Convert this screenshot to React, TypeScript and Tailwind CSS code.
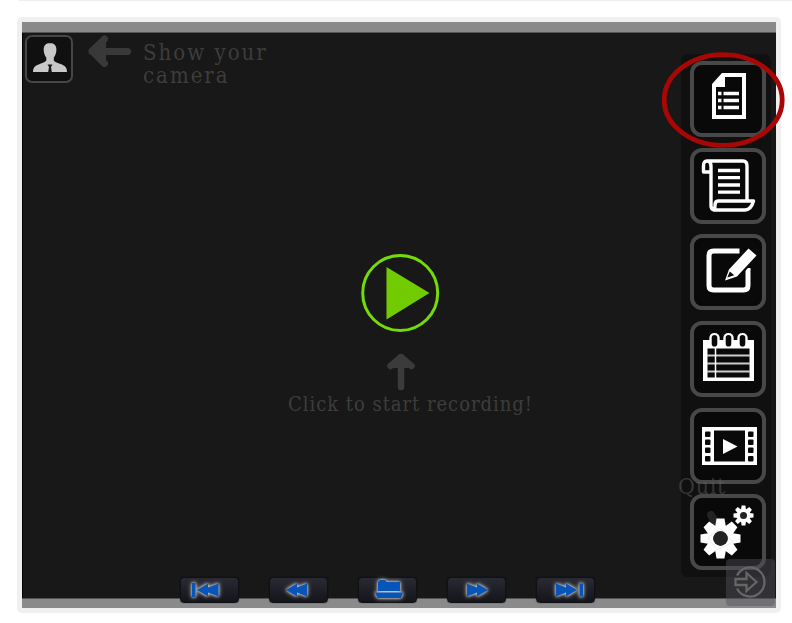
import type { ReactNode } from "react";

function ToolButton({ label, viewBox, children }: { label: string; viewBox: string; children: ReactNode }) {
  return (
    <button aria-label={label} className="h-[76px] w-[76px] shrink-0 rounded-[12px] border-4 border-[#484848] bg-[#090909]">
      <svg viewBox={viewBox} className="-m-1 block h-[76px] w-[76px]">
        {children}
      </svg>
    </button>
  );
}

function Gear({ cx, cy, outer, body, hole, tooth }: { cx: number; cy: number; outer: number; body: number; hole: number; tooth: number }) {
  return (
    <g transform={`translate(${cx} ${cy})`}>
      {[0, 45, 90, 135].map((a) => (
        <path
          key={a}
          transform={`rotate(${a})`}
          fill="#fff"
          d={`M${-tooth * 0.9} ${-outer}H${tooth * 0.9}L${tooth * 1.2} ${-body + 1}V${body - 1}L${tooth * 0.9} ${outer}H${-tooth * 0.9}L${-tooth * 1.2} ${body - 1}V${-body + 1}Z`}
        />
      ))}
      <circle r={body} fill="#fff" />
      <circle r={hole} fill="#222" />
    </g>
  );
}

function MediaButton({ label, children }: { label: string; children: ReactNode }) {
  return (
    <button
      aria-label={label}
      className="h-[26px] w-[59px] rounded-[4px] border border-[#101116] bg-linear-to-b from-[#292a33] to-[#14151b] shadow-[0_0_1px_#000]"
    >
      <svg viewBox="0 0 59 26" className="-m-px block h-[26px] w-[59px] fill-[#0755b8] drop-shadow-[0_0_2px_#c9c9c9]">
        <g className="drop-shadow-[0_0_1px_#c9c9c9]">{children}</g>
      </svg>
    </button>
  );
}

export default function App() {
  return (
    <div className="relative h-[623px] w-[792px] overflow-hidden bg-white font-['DejaVu_Serif_Condensed','DejaVu_Serif',serif]">
      <div className="ml-[19px] h-px bg-[#ededed]" />
      <div className="mt-4 ml-[17px] h-[596px] w-[764px] rounded-[5px] bg-[#f0f0f0] p-[5px]">
        <div className="flex h-[586px] w-[754px] flex-col bg-[#181818]">
          <div className="h-[11px] shrink-0 border-b border-[#555] bg-[#8a8a8a]" />

          <main className="flex h-[565px] shrink-0 border-l border-black">
            <div className="flex w-[120px] shrink-0 pt-[2px] pl-[2px]">
              <button aria-label="Camera" className="h-[48px] w-[48px] rounded-[7px] border-2 border-[#474747] bg-[#101010]">
                <svg viewBox="25 35 48 48" className="-m-0.5 block h-[48px] w-[48px]">
                  <path
                    fill="#c8c8c8"
                    d="M50 43c-4.500 0-6.500 3-6.300 7 .2 3.500 1.300 6 2.600 7.500v3c-1 1.500-3 2-6 3.200-4.500 1.700-7.300 3-7.300 8.300h34c0-5.300-2.700-6.700-7.200-8.300-3-1.200-5-1.700-6-3.200v-3c1.300-1.500 2.400-4 2.600-7.500.2-4-1.900-7-6.400-7Z"
                  />
                  <path fill="#171717" d="M47.500 64.500h5l-1.500 2.500 .8 5h-3.600l.8-5Z" />
                </svg>
              </button>
              <svg viewBox="88 35 44 34" className="ml-[15px] h-[34px] w-[44px]">
                <path d="M104.500 39L92 51l12.500 12.500M92 51.500h35.500" fill="none" stroke="#393939" strokeWidth="7" strokeLinecap="round" strokeLinejoin="round" />
                <path d="M91 51l15-12v25Z" fill="#393939" />
              </svg>
            </div>
            <p className="mt-[8px] w-[145px] shrink-0 text-[22px] leading-[23px] tracking-[2px] text-[#3d3d3d]">
              Show your
              <br />
              camera
            </p>
            <section className="flex w-[226px] shrink-0 flex-col items-center pt-[220px]">
              <svg viewBox="361 253 80 80" className="h-[80px] w-[80px] shrink-0">
                <circle cx="400.200" cy="293" r="37.500" fill="none" stroke="#74db08" strokeWidth="3" />
                <path d="M386.500 267L429.500 293L386.500 319.500Z" fill="#72cb00" />
              </svg>
              <svg viewBox="386 351 30 40" className="mt-[18px] h-[40px] w-[30px] shrink-0">
                <path d="M401 357v30M390.500 366l10.500-9 10.500 9" fill="none" stroke="#3b3b3b" strokeWidth="6.500" strokeLinecap="round" strokeLinejoin="round" />
                <path d="M391 368l10-11 10 11Z" fill="#3b3b3b" />
              </svg>
              <p className="ml-[19px] text-[20px] leading-[26px] tracking-[0.960px] whitespace-nowrap text-[#3d3d3d]">Click to start recording!</p>
            </section>
            <aside className="mt-[21px] ml-auto mr-[5px] flex h-[523px] w-[90px] shrink-0 flex-col items-center gap-[10.650px] rounded-[7px] bg-[#101010] pt-[7px] pl-1">
              <ToolButton label="Document" viewBox="690 61 76 76">
                <path fill="#fff" d="M722 73h24v46h-34V84Z" />
                <path fill="#090909" d="M725 77h17v38h-26V87h9Z" />
                <path d="M718 93.500h3.500M718 100.500h3.500M718 107.500h3.500M723.500 93.500H739M723.500 100.500H739M723.500 107.500H739" stroke="#fff" strokeWidth="3.300" />
              </ToolButton>
              <ToolButton label="Script" viewBox="691 148 76 76">
                <g fill="none" stroke="#fff" strokeWidth="3.400" strokeLinejoin="round">
                  <path d="M708 161h36q4 0 4 5v34M712 174v32q0 4 4 4h30q6 0 8.500-9H719q-3 0-3 4.500t-2 4.500M712 174v-7q0-6-4-6-3.500 0-3.500 5v6h7.500" />
                </g>
                <path d="M719 170.500h22M719 177.700h22M719 185h22M719 192.200h22" stroke="#fff" strokeWidth="3.300" />
              </ToolButton>
              <ToolButton label="Edit" viewBox="690.500 234 76 76">
                <path d="M740 251h-26q-4.500 0-4.500 4.500v30q0 4.500 4.500 4.500h30q4.500 0 4.500-4.500V268" fill="none" stroke="#fff" strokeWidth="5" />
                <path d="M724.500 282L729 269l20-21.500 9 8-20 21.500Z" fill="#fff" stroke="#090909" strokeWidth="3" />
                <path d="M725.500 280.500L729.500 269.500l19.500-21 8 7-19.500 21Z" fill="#fff" />
                <path d="M727.800 277.500l2.500-6 4.500 3.700Z" fill="#090909" />
              </ToolButton>
              <ToolButton label="Notes" viewBox="690 321 76 76">
                <path d="M703 340h51v41h-51Z" fill="#fff" />
                <path d="M707.500 348.500h42v29h-42Z" fill="#090909" />
                <path d="M707 355.500h43M707 363.500h43M707 371.500h43" stroke="#ccc" strokeWidth="1.800" />
                <path d="M715.500 348v30" stroke="#fff" strokeWidth="1.500" />
                {[714.5, 728.5, 742.5].map((x) => (
                  <g key={x}>
                    <rect x={x - 5.2} y="333" width="10.400" height="14" rx="5" fill="#fff" />
                    <rect x={x - 2.8} y="335" width="5.600" height="11.500" rx="2.800" fill="#090909" />
                  </g>
                ))}
              </ToolButton>
              <ToolButton label="Video" viewBox="690 408 76 76">
                <path d="M702 427h55v38h-55Z" fill="#fff" />
                <path d="M714 430.500h31v31h-31Z" fill="#090909" />
                <path d="M723 439l14.500 7.500-14.500 7.500Z" fill="#fff" />
                {[431.5, 439.5, 447.5, 456].map((y) => (
                  <g key={y} fill="#090909">
                    <rect x="705" y={y} width="5.500" height="5.500" rx="1" />
                    <rect x="748" y={y} width="5.500" height="5.500" rx="1" />
                  </g>
                ))}
              </ToolButton>
              <ToolButton label="Settings" viewBox="690 494 76 76">
                <path d="M711 515l5 8" stroke="#232323" strokeWidth="8" strokeLinecap="round" />
                <Gear cx={720.5} cy={538.5} outer={20} body={13.5} hole={7.2} tooth={4.4} />
                <Gear cx={743.5} cy={515.5} outer={10} body={6.7} hole={3.5} tooth={2.1} />
                <path d="M708 538l12-10 13 14-16 8Z" fill="none" stroke="#bbb" strokeWidth=".5" opacity=".6" />
                <circle cx="720.500" cy="538.500" r="7.200" fill="#222" />
              </ToolButton>
            </aside>
          </main>

          <div className="h-[10px] shrink-0 border-t border-[#555] bg-[#8a8a8a]" />
        </div>
      </div>

      <nav className="absolute top-[577px] left-[180px] flex gap-[30px]">
        <MediaButton label="First">
          <path d="M12 6h3.500v14H12ZM17 13l11-6.500v4L38.500 6.500v13L28 15.500v4Z" />
        </MediaButton>
        <MediaButton label="Rewind">
          <path d="M17 13l11-6.500v4L38 6.500v13L28 15.500v4Z" />
        </MediaButton>
        <MediaButton label="Open">
          <path d="M20 14V5l2-2h5l2 2h13v9ZM17 15.500h28L43 21H19.500Z" />
        </MediaButton>
        <MediaButton label="Forward">
          <path d="M20 6.500l10 4v-4L41 13l-11 6.500v-4l-10 4Z" />
        </MediaButton>
        <MediaButton label="Last">
          <path d="M20 6.500l10 4v-4L41 13l-11 6.500v-4l-10 4ZM43.500 6.500H47v13h-3.500Z" />
        </MediaButton>
      </nav>

      <span className="absolute top-[472px] left-[678px] text-[23px] leading-[28px] tracking-[0.700px] text-[#666]/45">Quit</span>
      <button aria-label="Quit" className="absolute top-[559px] left-[726px] h-[47px] w-[49px] rounded-[4px] bg-[#50505c]/45">
        <svg viewBox="726 559 49 47" className="block h-[47px] w-[49px]">
          <g fill="none" stroke="#666" strokeWidth="2.300">
            <path d="M737 575.500a14.500 14.500 0 1 1 0 13" />
            <path d="M735.500 579h11v-6l10 9-10 9v-6h-11Z" />
          </g>
        </svg>
      </button>
      <svg viewBox="660 50 128 100" className="pointer-events-none absolute top-[50px] left-[660px] h-[100px] w-[128px]">
        <ellipse cx="723.200" cy="100" rx="59" ry="45.300" fill="none" stroke="#a90606" strokeWidth="4.800" />
      </svg>
    </div>
  );
}
